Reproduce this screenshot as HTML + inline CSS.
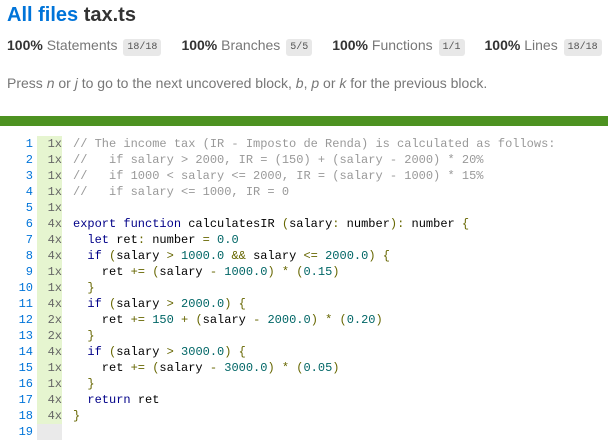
<!DOCTYPE html>
<html><head><style>
body{margin:0;background:#fff;font-family:"Liberation Sans",Helvetica,Arial,sans-serif;font-size:14px;color:#333;width:608px;height:445px;overflow:hidden}
h1{margin:0;position:absolute;left:7px;top:3px;font-size:20px;font-weight:bold;color:#333;line-height:24px}
h1 a{color:#0074D9}
.stats{position:absolute;left:7px;top:35px;white-space:nowrap;line-height:20px}
.stats span.s{display:inline-block;margin-right:20px}
.stats b{color:#333}
.q{color:#777}
.fr{font-family:"Liberation Mono",monospace;font-size:10px;background:#e8e8e8;color:#555;padding:3px 4px;border-radius:3px;margin-left:2px;position:relative;top:-1px}
.help{position:absolute;left:7px;top:75px;color:#777;font-size:14px}
.bar{position:absolute;left:0;top:116px;width:608px;height:10px;background:#4d9221}
table{position:absolute;left:0;top:136px;border-collapse:collapse;font-family:"Liberation Mono",monospace;font-size:12px}
td{padding:0;vertical-align:top;line-height:16px}
.ln{width:33px;text-align:right;color:#0074D9;padding-right:4px}
.ln div,.ct div{height:16px}
.ct{width:25px;text-align:right;color:#666}
.ct div{background:#e6f5d0;padding-right:0px}
.ct div.e{background:#eaeaea}
.code{padding-left:11px;white-space:pre;color:#000}
.code div{height:16px}
.k{color:#008}.p{color:#660}.l{color:#066}.c{color:#999}
</style></head><body>
<h1><a>All files</a> tax.ts</h1>
<div class="stats"><span class="s"><b>100%</b> <span class="q">Statements</span> <span class="fr">18/18</span></span><span class="s"><b>100%</b> <span class="q">Branches</span> <span class="fr">5/5</span></span><span class="s"><b>100%</b> <span class="q">Functions</span> <span class="fr">1/1</span></span><span class="s"><b>100%</b> <span class="q">Lines</span> <span class="fr">18/18</span></span></div>
<div class="help">Press <i>n</i> or <i>j</i> to go to the next uncovered block, <i>b</i>, <i>p</i> or <i>k</i> for the previous block.</div>
<div class="bar"></div>
<table><tr>
<td class="ln"><div>1</div><div>2</div><div>3</div><div>4</div><div>5</div><div>6</div><div>7</div><div>8</div><div>9</div><div>10</div><div>11</div><div>12</div><div>13</div><div>14</div><div>15</div><div>16</div><div>17</div><div>18</div><div>19</div></td>
<td class="ct"><div>1x</div><div>1x</div><div>1x</div><div>1x</div><div>1x</div><div>4x</div><div>4x</div><div>4x</div><div>1x</div><div>1x</div><div>4x</div><div>2x</div><div>2x</div><div>4x</div><div>1x</div><div>1x</div><div>4x</div><div>4x</div><div class="e">&nbsp;</div></td>
<td class="code"><div class="c">// The income tax (IR - Imposto de Renda) is calculated as follows:</div><div class="c">//   if salary &gt; 2000, IR = (150) + (salary - 2000) * 20%</div><div class="c">//   if 1000 &lt; salary &lt;= 2000, IR = (salary - 1000) * 15%</div><div class="c">//   if salary &lt;= 1000, IR = 0</div><div> </div><div><span class="k">export function</span> calculatesIR <span class="p">(</span>salary<span class="p">:</span> number<span class="p">):</span> number <span class="p">{</span></div><div>  <span class="k">let</span> ret<span class="p">:</span> number <span class="p">=</span> <span class="l">0.0</span></div><div>  <span class="k">if</span> <span class="p">(</span>salary <span class="p">&gt;</span> <span class="l">1000.0</span> <span class="p">&amp;&amp;</span> salary <span class="p">&lt;=</span> <span class="l">2000.0</span><span class="p">)</span> <span class="p">{</span></div><div>    ret <span class="p">+=</span> <span class="p">(</span>salary <span class="p">-</span> <span class="l">1000.0</span><span class="p">)</span> <span class="p">*</span> <span class="p">(</span><span class="l">0.15</span><span class="p">)</span></div><div>  <span class="p">}</span></div><div>  <span class="k">if</span> <span class="p">(</span>salary <span class="p">&gt;</span> <span class="l">2000.0</span><span class="p">)</span> <span class="p">{</span></div><div>    ret <span class="p">+=</span> <span class="l">150</span> <span class="p">+</span> <span class="p">(</span>salary <span class="p">-</span> <span class="l">2000.0</span><span class="p">)</span> <span class="p">*</span> <span class="p">(</span><span class="l">0.20</span><span class="p">)</span></div><div>  <span class="p">}</span></div><div>  <span class="k">if</span> <span class="p">(</span>salary <span class="p">&gt;</span> <span class="l">3000.0</span><span class="p">)</span> <span class="p">{</span></div><div>    ret <span class="p">+=</span> <span class="p">(</span>salary <span class="p">-</span> <span class="l">3000.0</span><span class="p">)</span> <span class="p">*</span> <span class="p">(</span><span class="l">0.05</span><span class="p">)</span></div><div>  <span class="p">}</span></div><div>  <span class="k">return</span> ret</div><div><span class="p">}</span></div><div> </div></td>
</tr></table>
</body></html>
